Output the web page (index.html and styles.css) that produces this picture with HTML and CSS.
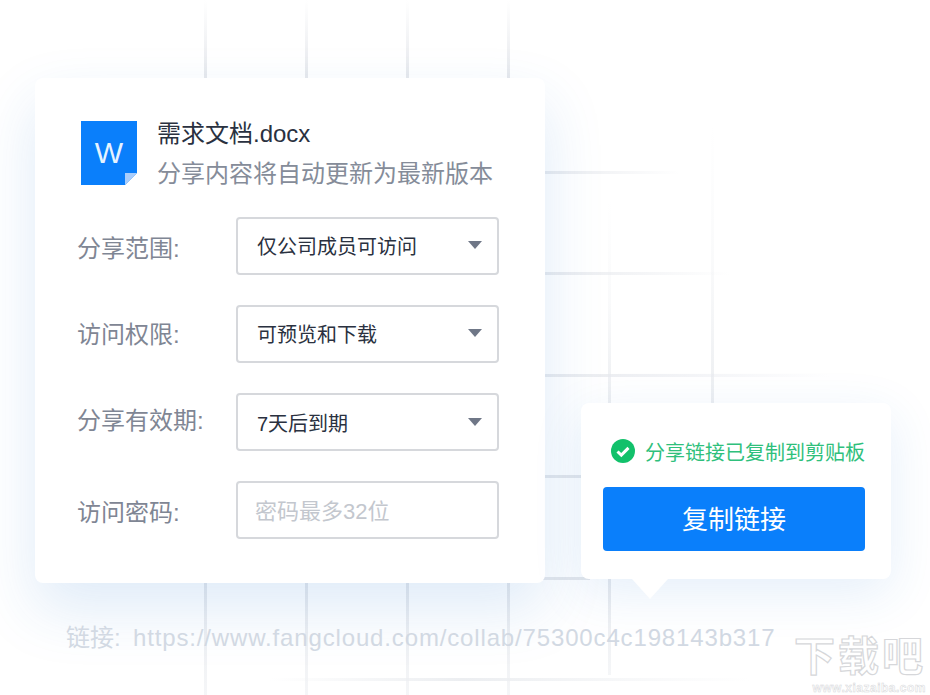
FILE: index.html
```html
<!DOCTYPE html>
<html>
  <head>
    <title>分享</title>
    <meta name="viewport" content="width=device-width, initial-scale=1">
    <link rel="stylesheet" href="styles.css">
  </head>
  <body>
    <div class="stage">
      <!-- faded grid behind the cards -->
      <svg class="grid" width="930" height="695" viewBox="0 0 930 695">
        <defs>
          <linearGradient id="fadeTop" x1="0" y1="0" x2="0" y2="1">
            <stop offset="0" stop-color="#e6e8ec" stop-opacity="0"/>
            <stop offset="1" stop-color="#e6e8ec"/>
          </linearGradient>
          <linearGradient id="fadeTopLight" x1="0" y1="0" x2="0" y2="1">
            <stop offset="0" stop-color="#eceef1" stop-opacity="0"/>
            <stop offset=".5" stop-color="#eceef1" stop-opacity=".3"/>
            <stop offset="1" stop-color="#eceef1"/>
          </linearGradient>
          <linearGradient id="fadeBottom" x1="0" y1="0" x2="0" y2="1">
            <stop offset="0" stop-color="#e6e8ec"/>
            <stop offset="1" stop-color="#eef0f3" stop-opacity=".6"/>
          </linearGradient>
          <linearGradient id="fadeRight" x1="0" y1="0" x2="1" y2="0">
            <stop offset="0" stop-color="#e8eaee"/>
            <stop offset="1" stop-color="#e8eaee" stop-opacity="0"/>
          </linearGradient>
          <linearGradient id="fadeBoth" x1="0" y1="0" x2="1" y2="0">
            <stop offset="0" stop-color="#eceef1" stop-opacity="0"/>
            <stop offset=".4" stop-color="#eceef1"/>
            <stop offset="1" stop-color="#eceef1" stop-opacity="0"/>
          </linearGradient>
        </defs>
        <rect x="204" y="0" width="3" height="80" fill="url(#fadeTop)"/>
        <rect x="305" y="0" width="3" height="80" fill="url(#fadeTop)"/>
        <rect x="406" y="0" width="3" height="80" fill="url(#fadeTop)"/>
        <rect x="507" y="0" width="3" height="80" fill="url(#fadeTop)"/>
        <rect x="608" y="200" width="3" height="205" fill="url(#fadeTopLight)"/>
        <rect x="711" y="125" width="3" height="280" fill="url(#fadeTopLight)"/>
        <rect x="204" y="580" width="3" height="115" fill="url(#fadeBottom)"/>
        <rect x="305" y="580" width="3" height="115" fill="url(#fadeBottom)"/>
        <rect x="406" y="580" width="3" height="115" fill="url(#fadeBottom)"/>
        <rect x="507" y="580" width="3" height="115" fill="url(#fadeBottom)"/>
        <rect x="608" y="575" width="3" height="100" fill="url(#fadeBottom)"/>
        <rect x="540" y="171" width="140" height="3" fill="url(#fadeRight)"/>
        <rect x="540" y="272" width="190" height="3" fill="url(#fadeRight)"/>
        <rect x="540" y="374" width="290" height="3" fill="url(#fadeRight)"/>
        <rect x="540" y="475" width="50" height="3" fill="#e6e8ec"/>
        <rect x="540" y="577" width="50" height="3" fill="#e6e8ec"/>
        <rect x="270" y="678" width="480" height="3" fill="url(#fadeBoth)"/>
      </svg>

      <div class="card">
        <div class="file">
          <div class="file-icon">
            <svg width="56" height="64" viewBox="0 0 56 64">
              <polygon points="0,0 56,0 56,52 44,64 0,64" fill="#0a7ffb"/>
              <polygon points="44,64 44,52 56,52" fill="#a9cdfb"/>
            </svg>
            <span class="file-letter">W</span>
          </div>
          <div class="file-info">
            <div class="file-name">需求文档.docx</div>
            <div class="file-note">分享内容将自动更新为最新版本</div>
          </div>
        </div>
        <div class="row">
          <span class="label">分享范围:</span>
          <div class="select"><span>仅公司成员可访问</span><i class="caret"></i></div>
        </div>
        <div class="row">
          <span class="label label-up">访问权限:</span>
          <div class="select"><span>可预览和下载</span><i class="caret"></i></div>
        </div>
        <div class="row">
          <span class="label label-up2">分享有效期:</span>
          <div class="select select-low"><span>7天后到期</span><i class="caret"></i></div>
        </div>
        <div class="row">
          <span class="label">访问密码:</span>
          <div class="select password"><span>密码最多32位</span></div>
        </div>
      </div>

      <div class="link"><span class="link-name">链接:</span>https://www.fangcloud.com/collab/75300c4c198143b317</div>

      <div class="popup">
        <div class="copied">
          <svg width="24" height="24" viewBox="0 0 24 24">
            <circle cx="12" cy="12" r="12" fill="#12c16b"/>
            <path d="M6.5 12.5l3.8 3.6 7.2-7.2" fill="none" stroke="#fff" stroke-width="3"/>
          </svg>
          <span>分享链接已复制到剪贴板</span>
        </div>
        <div class="copy-btn">复制链接</div>
      </div>

      <div class="mark">
        <div class="mark-name">下载吧</div>
        <div class="mark-url">www.xiazaiba.com</div>
      </div>
    </div>
  </body>
</html>
```
FILE: styles.css
```css
body{
  margin:0;
  background:#fff;
}
.stage{
  position:relative;
  width:930px;
  height:695px;
  overflow:hidden;
  padding-top:78px;
  box-sizing:border-box;
  font-family:"Liberation Sans","Noto Sans CJK SC",sans-serif;
}
.grid{
  position:absolute;
  left:0;
  top:0;
}
.card{
  position:relative;
  width:510px;
  height:505px;
  margin-left:35px;
  padding:43px 0 0 43px;
  box-sizing:border-box;
  background:#fff;
  border-radius:8px;
  box-shadow:0 26px 60px rgba(40,120,210,.15);
}
.file{
  display:flex;
  gap:20px;
  height:64px;
  margin:0 0 32px 3px;
}
.file-icon{
  position:relative;
  width:56px;
  height:64px;
}
.file-icon svg{
  display:block;
}
.file-letter{
  position:absolute;
  left:0;
  top:15px;
  width:56px;
  text-align:center;
  font-size:30px;
  line-height:34px;
  color:#e6f3ff;
}
.file-info{
  margin-top:-3px;
}
.file-name{
  font-size:24px;
  line-height:32px;
  color:#2a3140;
}
.file-note{
  margin-top:8px;
  font-size:24px;
  line-height:32px;
  color:#858c99;
}
.row{
  display:flex;
  align-items:center;
  height:58px;
  margin-bottom:30px;
}
.label{
  width:158px;
  margin-left:-1px;
  padding-right:1px;
  font-size:24px;
  color:#7f8694;
}
.label-up{
  margin-bottom:4px;
}
.label-up2{
  margin-bottom:8px;
}
.select{
  display:flex;
  align-items:center;
  justify-content:space-between;
  width:263px;
  height:58px;
  padding:0 15px 2px 19px;
  box-sizing:border-box;
  border:2px solid #d6d8dc;
  border-radius:4px;
  font-size:20px;
  color:#2a3140;
}
.select-low{
  padding-bottom:0;
}
.password{
  padding-left:17px;
  font-size:22px;
  color:#c3c7ce;
}
.caret{
  width:0;
  height:0;
  border-left:7px solid transparent;
  border-right:7px solid transparent;
  border-top:8px solid #6f7787;
}
.link{
  position:relative;
  margin:40px 0 0 66px;
  font-size:24px;
  line-height:30px;
  letter-spacing:.85px;
  color:#d2d9e3;
  white-space:nowrap;
}
.link-name{
  display:inline-block;
  width:67px;
  letter-spacing:0;
}
.popup{
  position:absolute;
  left:581px;
  top:403px;
  width:310px;
  height:176px;
  padding:34px 26px 0 22px;
  box-sizing:border-box;
  background:#fff;
  border-radius:8px;
  box-shadow:0 14px 50px rgba(40,120,210,.12);
}
.popup:after{
  content:"";
  position:absolute;
  left:51px;
  top:176px;
  border-left:18px solid transparent;
  border-right:18px solid transparent;
  border-top:20px solid #fff;
}
.copied{
  display:flex;
  align-items:center;
  justify-content:flex-end;
  gap:10px;
  height:28px;
  font-size:20px;
  color:#2fc07c;
}
.copied span{
  white-space:nowrap;
}
.copy-btn{
  width:262px;
  height:64px;
  margin-top:22px;
  background:#0a7ffb;
  border-radius:4px;
  color:#fff;
  font-size:26px;
  line-height:66px;
  text-align:center;
}
.mark{
  position:absolute;
  right:4px;
  bottom:2px;
  width:132px;
}
.mark-name{
  margin-bottom:5px;
  font-size:41px;
  line-height:42px;
  letter-spacing:3px;
  font-weight:700;
  color:#fff;
  -webkit-text-stroke:1.2px #d6d7da;
}
.mark-url{
  font-size:12px;
  line-height:10px;
  letter-spacing:.5px;
  font-weight:700;
  color:#fff;
  -webkit-text-stroke:.5px #d6d7da;
  text-align:right;
}
```
